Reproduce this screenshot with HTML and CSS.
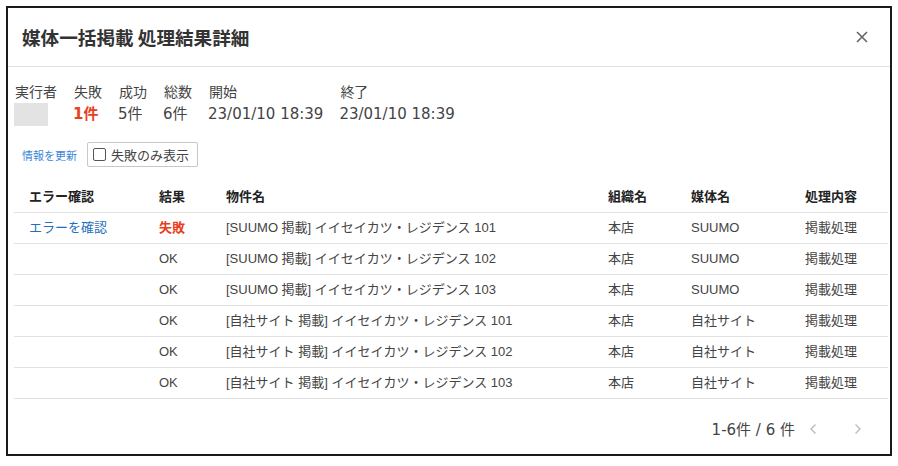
FILE: index.html
```html
<!DOCTYPE html>
<html lang="ja">
<head>
<meta charset="utf-8">
<link rel="stylesheet" href="styles.css">
</head>
<body>
<div class="frame">
  <div class="header">
    <h1 class="title">媒体一括掲載 処理結果詳細</h1>
    <span class="close"><svg width="12" height="12" viewBox="0 0 12 12"><path d="M1 1L11 11M11 1L1 11" stroke="#666" stroke-width="1.6" fill="none"/></svg></span>
  </div>
  <div class="info">
    <div class="col"><div class="lbl">実行者</div><div class="val"><span class="blank"></span></div></div>
    <div class="col"><div class="lbl">失敗</div><div class="val fail">1件</div></div>
    <div class="col"><div class="lbl">成功</div><div class="val">5件</div></div>
    <div class="col"><div class="lbl">総数</div><div class="val">6件</div></div>
    <div class="col"><div class="lbl">開始</div><div class="val">23/01/10 18:39</div></div>
    <div class="col"><div class="lbl">終了</div><div class="val">23/01/10 18:39</div></div>
  </div>
  <div class="toolbar">
    <a class="refresh">情報を更新</a>
    <label class="chk-btn"><span class="box"></span>失敗のみ表示</label>
  </div>
  <table class="grid">
    <colgroup><col class="c1"><col class="c2"><col class="c3"><col class="c4"><col class="c5"><col class="c6"></colgroup>
    <thead>
      <tr><th>エラー確認</th><th>結果</th><th>物件名</th><th>組織名</th><th>媒体名</th><th>処理内容</th></tr>
    </thead>
    <tbody>
      <tr><td><a class="err">エラーを確認</a></td><td class="ng">失敗</td><td>[SUUMO 掲載] イイセイカツ・レジデンス 101</td><td>本店</td><td>SUUMO</td><td>掲載処理</td></tr>
      <tr><td></td><td>OK</td><td>[SUUMO 掲載] イイセイカツ・レジデンス 102</td><td>本店</td><td>SUUMO</td><td>掲載処理</td></tr>
      <tr><td></td><td>OK</td><td>[SUUMO 掲載] イイセイカツ・レジデンス 103</td><td>本店</td><td>SUUMO</td><td>掲載処理</td></tr>
      <tr><td></td><td>OK</td><td>[自社サイト 掲載] イイセイカツ・レジデンス 101</td><td>本店</td><td>自社サイト</td><td>掲載処理</td></tr>
      <tr><td></td><td>OK</td><td>[自社サイト 掲載] イイセイカツ・レジデンス 102</td><td>本店</td><td>自社サイト</td><td>掲載処理</td></tr>
      <tr><td></td><td>OK</td><td>[自社サイト 掲載] イイセイカツ・レジデンス 103</td><td>本店</td><td>自社サイト</td><td>掲載処理</td></tr>
    </tbody>
  </table>
  <div class="pager">
    <span class="count">1-6件 / 6 件</span>
    <span class="nav"><svg width="8" height="12" viewBox="0 0 8 12"><path d="M6.5 1.5L2 6L6.5 10.5" stroke="#bbb" stroke-width="1.4" fill="none"/></svg></span>
    <span class="nav"><svg width="8" height="12" viewBox="0 0 8 12"><path d="M1.5 1.5L6 6L1.5 10.5" stroke="#bbb" stroke-width="1.4" fill="none"/></svg></span>
  </div>
</div>
</body>
</html>
```
FILE: styles.css
```css
* { box-sizing: border-box; }
html, body { margin: 0; padding: 0; background: #fff; }
body {
  font-family: "Liberation Sans", "Noto Sans CJK JP", sans-serif;
  color: #444;
}
.frame {
  margin: 6px 0 0 6px;
  width: 886px;
  height: 450px;
  border: 2px solid #1a1a1a;
}
.header {
  height: 59px;
  border-bottom: 1px solid #e2e2e2;
  display: flex;
  align-items: center;
  justify-content: space-between;
  padding: 0 22px 1px 14px;
}
.title {
  margin: 0;
  font-size: 18.6px;
  font-weight: bold;
  color: #333;
  font-family: "Noto Sans CJK JP", sans-serif;
  line-height: 24px;
}
.close { display: flex; width: 12px; height: 12px; }
.info {
  display: flex;
  gap: 16px;
  padding: 13px 0 0 6px;
  font-family: "DejaVu Sans", "Noto Sans CJK JP", sans-serif;
  color: #444;
}
.lbl { font-size: 14px; line-height: 23px; font-family: "Noto Sans CJK JP", sans-serif; padding-left: 1px; }
.val { font-size: 15px; line-height: 23px; height: 23px; }
.val.fail { color: #e8401e; font-weight: bold; }
.blank { display: block; width: 34px; height: 23px; background: #e3e3e3; }
.toolbar {
  display: flex;
  align-items: center;
  margin-top: 16px;
  padding-left: 14px;
  height: 25px;
}
.refresh {
  font-size: 11px;
  color: #3d85d6;
  font-family: "Noto Sans CJK JP", sans-serif;
  margin-right: 10px;
}
.chk-btn {
  display: flex;
  align-items: center;
  height: 25px;
  width: 111px;
  border: 1px solid #c8c8c8;
  border-radius: 2px;
  padding-left: 5px;
  font-size: 13px;
  color: #444;
  font-family: "Noto Sans CJK JP", sans-serif;
}
.box {
  width: 13px;
  height: 13px;
  border: 1.5px solid #555;
  border-radius: 2px;
  margin-right: 5px;
}
.grid {
  margin: 13px 0 0 6px;
  width: 874px;
  border-collapse: collapse;
  table-layout: fixed;
  font-size: 13px;
}
.c1 { width: 130px; } .c2 { width: 67px; } .c3 { width: 382px; }
.c4 { width: 83px; } .c5 { width: 114px; } .c6 { width: 98px; }
.grid th {
  text-align: left;
  font-weight: bold;
  color: #222;
  height: 32px;
  padding: 0 0 0 15px;
  border-bottom: 1px solid #e2e2e2;
  font-family: "Noto Sans CJK JP", sans-serif;
}
.grid td {
  height: 31px;
  line-height: 16px;
  padding: 0 0 0 15px;
  border-bottom: 1px solid #e2e2e2;
  white-space: nowrap;
}
.err { color: #1f6fbf; }
.ng { color: #e8401e; font-weight: bold; }
.pager {
  display: flex;
  align-items: center;
  justify-content: flex-end;
  margin-top: 20px;
  padding-right: 28px;
  height: 20px;
  font-family: "DejaVu Sans", "Noto Sans CJK JP", sans-serif;
  font-size: 15px;
  color: #444;
}
.count { margin-right: 14px; }
.nav { display: flex; width: 8px; }
.nav + .nav { margin-left: 37px; }
```
